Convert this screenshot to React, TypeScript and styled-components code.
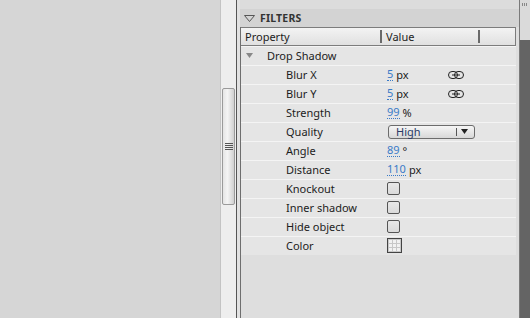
import styled, { createGlobalStyle } from 'styled-components';

const GlobalStyle = createGlobalStyle`
  html, body {
    margin: 0;
    padding: 0;
    width: 530px;
    height: 318px;
    overflow: hidden;
    background: #d6d6d6;
  }
  body {
    font-family: 'Noto Sans', 'Liberation Sans', sans-serif;
    font-size: 11px;
    color: #1c1c1c;
  }
`;

const Screen = styled.div`
  display: flex;
  height: 318px;
`;

const Stage = styled.div`
  width: 220px;
  background: #d6d6d6;
`;

const ScrollTrack = styled.div`
  width: 16px;
  background: #eeeeee;
  border-left: 1px solid #c4c4c4;
  padding-top: 88px;
  box-sizing: border-box;
  display: flex;
  justify-content: center;
`;

const ScrollThumb = styled.div`
  width: 13px;
  height: 117px;
  box-sizing: border-box;
  border: 1px solid #9a9a9a;
  border-radius: 2px;
  background: linear-gradient(to right, #e4e4e4, #f4f4f4 40%, #d0d0d0);
  display: flex;
  align-items: center;
  justify-content: center;
`;

const Grip = styled.div`
  width: 8px;
  height: 7px;
  background: repeating-linear-gradient(
    to bottom,
    #555 0px,
    #555 1px,
    transparent 1px,
    transparent 2px
  );
`;

const Divider = styled.div`
  width: 4px;
  box-sizing: border-box;
  border-left: 1px solid #555;
  background: #e2e2e2;
`;

const Panel = styled.div`
  width: 280px;
  box-sizing: border-box;
  background: #dedede;
  border-right: 1px solid #7a7a7a;
  display: flex;
  flex-direction: column;
`;

const TopGap = styled.div`
  height: 9px;
  background: #dcdcdc;
`;

const SectionHeader = styled.div`
  height: 18px;
  background: #d3d3d3;
  display: flex;
  align-items: center;
  gap: 5px;
  padding-left: 4px;
  font-weight: bold;
  font-size: 10.5px;
  color: #333;
  letter-spacing: 0.2px;
`;

const Table = styled.div`
  margin-right: 3px;
  border-left: 1px solid #6e6e6e;
  flex: 1;
  display: flex;
  flex-direction: column;
`;

const HeadRow = styled.div`
  height: 19px;
  box-sizing: border-box;
  border: 1px solid #7c7c7c;
  border-left: none;
  background: linear-gradient(to bottom, #f3f3f3, #e0e0e0);
  display: grid;
  grid-template-columns: 139px 98px 1fr;
  align-items: center;
`;

const HeadCell = styled.div<{ $sep?: boolean }>`
  padding-left: 4px;
  height: 13px;
  line-height: 13px;
  border-left: ${(p) => (p.$sep ? '2px solid #6a6a6a' : 'none')};
`;

const Row = styled.div`
  height: 19px;
  box-sizing: border-box;
  border-top: 1px solid #f4f4f4;
  padding-bottom: 1px;
  background: #e5e5e5;
  display: grid;
  grid-template-columns: 146px 61px 1fr;
  align-items: center;
`;

const Label = styled.div<{ $indent: number }>`
  padding-left: ${(p) => p.$indent}px;
  display: flex;
  align-items: center;
  white-space: nowrap;
`;

const Value = styled.div`
  display: flex;
  align-items: center;
  gap: 3px;
  white-space: nowrap;
`;

const Num = styled.span`
  color: #3a7bc8;
  border-bottom: 1px dotted #3a7bc8;
  line-height: 12px;
`;

const Check = styled.div`
  width: 11px;
  height: 11px;
  border: 1px solid #555;
  border-radius: 2px;
  background: linear-gradient(to bottom, #e8e8e8, #dadada);
`;

const Swatch = styled.div`
  width: 15px;
  height: 15px;
  box-sizing: border-box;
  border: 1px solid #444;
  background-color: #f2f2f2;
  background-image: linear-gradient(#c8c8c8 1px, transparent 1px),
    linear-gradient(to right, #c8c8c8 1px, transparent 1px);
  background-size: 4px 4px;
  background-position: 0 0;
`;

const Select = styled.div`
  width: 87px;
  height: 14px;
  margin-left: 1px;
  box-sizing: border-box;
  border: 1px solid #6c6c6c;
  border-radius: 3px;
  background: linear-gradient(to bottom, #f6f6f6, #d8d8d8);
  display: flex;
  align-items: center;
  padding-left: 7px;
  font-size: 11px;
  color: #2a3a66;
`;

const SelectText = styled.span`
  flex: 1;
`;

const SelectArrow = styled.span`
  border-left: 1px solid #555;
  height: 8px;
  width: 14px;
  display: flex;
  align-items: center;
  justify-content: center;
  margin-right: 3px;
`;

const Empty = styled.div`
  flex: 1;
  background: #dedede;
`;

const Rail = styled.div`
  width: 10px;
  display: flex;
  flex-direction: column;
`;

const RailTop = styled.div`
  height: 40px;
  background: #dadada;
  display: flex;
  justify-content: center;
  padding-top: 3px;
  box-sizing: border-box;
`;

const RailDots = styled.div`
  width: 6px;
  height: 3px;
  background: repeating-linear-gradient(
    to right,
    #888 0px,
    #888 1px,
    transparent 1px,
    transparent 2px
  );
`;

const RailBottom = styled.div`
  flex: 1;
  background: #646464;
`;

const Link = () => (
  <svg width="16" height="8" viewBox="0 0 16 8">
    <rect x="0.5" y="0.5" width="9" height="7" rx="3.5" fill="none" stroke="#222" />
    <rect x="6.5" y="0.5" width="9" height="7" rx="3.5" fill="none" stroke="#222" />
    <line x1="4" y1="4" x2="12" y2="4" stroke="#222" />
  </svg>
);

type Field =
  | { label: string; kind: 'num'; value: string; unit: string; link?: boolean }
  | { label: string; kind: 'check' }
  | { label: string; kind: 'select'; value: string }
  | { label: string; kind: 'color' };

const fields: Field[] = [
  { label: 'Blur X', kind: 'num', value: '5', unit: 'px', link: true },
  { label: 'Blur Y', kind: 'num', value: '5', unit: 'px', link: true },
  { label: 'Strength', kind: 'num', value: '99', unit: '%' },
  { label: 'Quality', kind: 'select', value: 'High' },
  { label: 'Angle', kind: 'num', value: '89', unit: '°' },
  { label: 'Distance', kind: 'num', value: '110', unit: 'px' },
  { label: 'Knockout', kind: 'check' },
  { label: 'Inner shadow', kind: 'check' },
  { label: 'Hide object', kind: 'check' },
  { label: 'Color', kind: 'color' },
];

const renderValue = (f: Field) => {
  switch (f.kind) {
    case 'num':
      return (
        <Value>
          <Num>{f.value}</Num>
          {f.unit}
        </Value>
      );
    case 'check':
      return <Check />;
    case 'color':
      return <Swatch />;
    case 'select':
      return (
        <Select>
          <SelectText>{f.value}</SelectText>
          <SelectArrow>
            <svg width="7" height="5" viewBox="0 0 7 5">
              <path d="M0 0 H7 L3.5 5 Z" fill="#222" />
            </svg>
          </SelectArrow>
        </Select>
      );
  }
};

export default function App() {
  return (
    <>
      <GlobalStyle />
      <Screen>
        <Stage />
        <ScrollTrack>
          <ScrollThumb>
            <Grip />
          </ScrollThumb>
        </ScrollTrack>
        <Divider />
        <Panel>
          <TopGap />
          <SectionHeader>
            <svg width="11" height="7" viewBox="0 0 11 7">
              <path d="M0.5 0.5 H10.5 L5.5 6.5 Z" fill="none" stroke="#555" />
            </svg>
            FILTERS
          </SectionHeader>
          <Table>
            <HeadRow>
              <HeadCell>Property</HeadCell>
              <HeadCell $sep>Value</HeadCell>
              <HeadCell $sep />
            </HeadRow>
            <Row>
              <Label $indent={5}>
                <svg width="7" height="5" viewBox="0 0 7 5" style={{ marginRight: 14 }}>
                  <path d="M0 0 H7 L3.5 5 Z" fill="#888" />
                </svg>
                Drop Shadow
              </Label>
            </Row>
            {fields.map((f) => (
              <Row key={f.label}>
                <Label $indent={45}>{f.label}</Label>
                {renderValue(f)}
                {f.kind === 'num' && f.link ? <Link /> : <span />}
              </Row>
            ))}
            <Empty />
          </Table>
        </Panel>
        <Rail>
          <RailTop>
            <RailDots />
          </RailTop>
          <RailBottom />
        </Rail>
      </Screen>
    </>
  );
}
